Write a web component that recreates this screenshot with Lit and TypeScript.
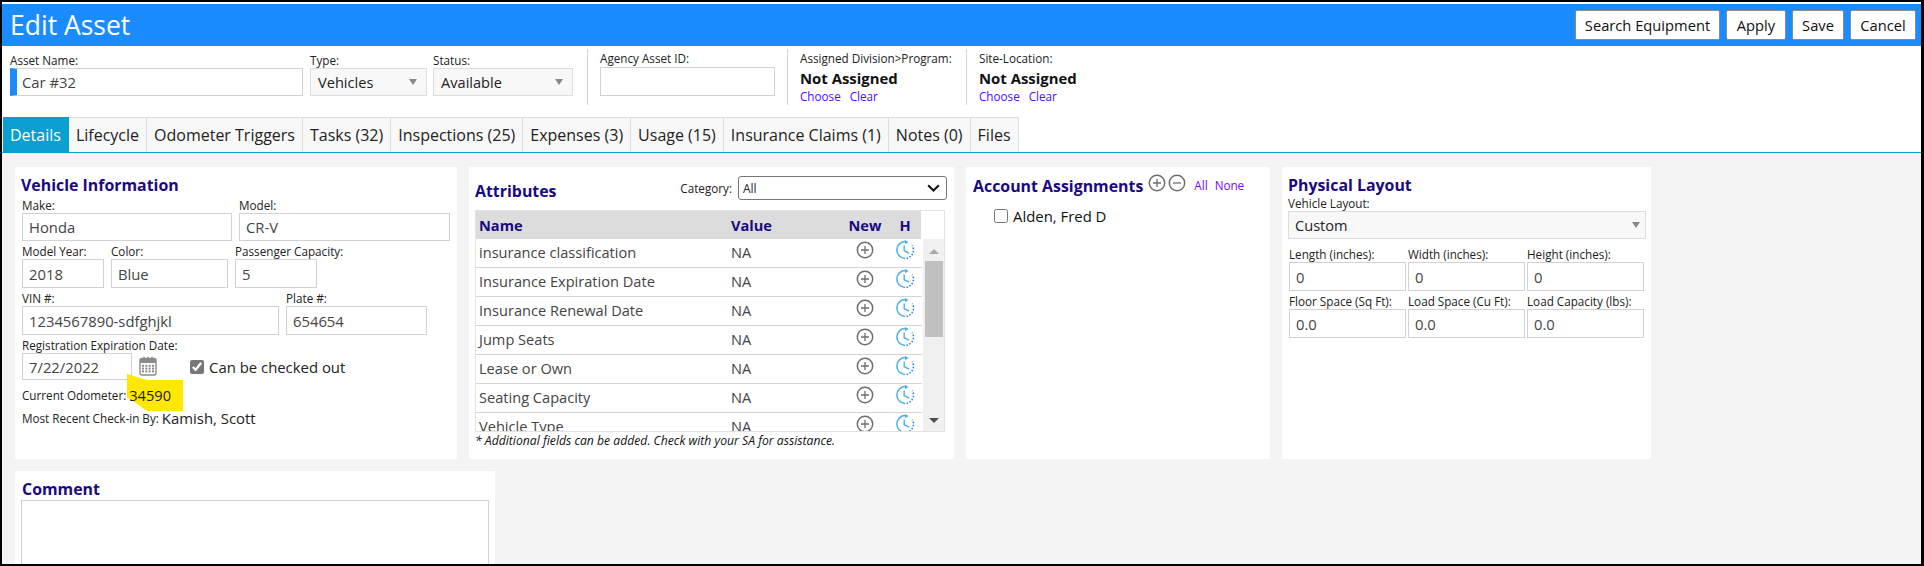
import { LitElement, html, css, svg } from "lit";
import { customElement } from "lit/decorators.js";

const plus = () => html`<svg class="ic" width="18" height="18" viewBox="0 0 18 18"><circle cx="9" cy="9" r="7.7" fill="none" stroke="#6e6e6e" stroke-width="1.5"/><path d="M9 5v8M5 9h8" stroke="#6e6e6e" stroke-width="1.3"/></svg>`;
const minus = () => html`<svg class="ic" width="18" height="18" viewBox="0 0 18 18"><circle cx="9" cy="9" r="7.7" fill="none" stroke="#6e6e6e" stroke-width="1.5"/><path d="M5 9h8" stroke="#6e6e6e" stroke-width="1.3"/></svg>`;
const clock = () => html`<svg class="ic" width="20" height="20" viewBox="0 0 20 20">
  <path d="M10.5 1.6A8.4 8.4 0 1 0 10 18.4" fill="none" stroke="#4db0ec" stroke-width="1.5"/>
  <path d="M11.5 18.3A8.4 8.4 0 0 0 17.2 5.6" fill="none" stroke="#2f86e8" stroke-width="1.6" stroke-dasharray="1.6 1.5"/>
  <path d="M10 0l3.6 2-3.6 2.2z" fill="#4db0ec"/>
  <path d="M9.2 5.5v5.2l5 2.4" fill="none" stroke="#4db0ec" stroke-width="1.4"/></svg>`;
const calendar = () => html`<svg width="18" height="20" viewBox="0 0 18 20">
  <rect x="1" y="2.5" width="16" height="16.5" rx="2" fill="#fff" stroke="#8a8a8a" stroke-width="1.4"/>
  <path d="M1 7V4.5a2 2 0 0 1 2-2h12a2 2 0 0 1 2 2V7z" fill="#8a8a8a"/>
  <path d="M5 .8v3M13 .8v3M9 .8v3" stroke="#8a8a8a" stroke-width="1.4"/>
  ${[8.8, 11.6, 14.4].map((y) => [4, 7.3, 10.6, 14].map((x) => svg`<rect x="${x - 1}" y="${y}" width="2" height="2" fill="#8a8a8a"/>`))}
</svg>`;
const chevron = () => html`<svg width="13" height="8" viewBox="0 0 13 8"><path d="M1.2 1.2l5.3 5.3 5.3-5.3" fill="none" stroke="#111" stroke-width="2"/></svg>`;

const tabs = ["Details", "Lifecycle", "Odometer Triggers", "Tasks (32)", "Inspections (25)", "Expenses (3)", "Usage (15)", "Insurance Claims (1)", "Notes (0)", "Files"];
const attrs = ["insurance classification", "Insurance Expiration Date", "Insurance Renewal Date", "Jump Seats", "Lease or Own", "Seating Capacity", "Vehicle Type"];

@customElement("app-root")
export class AppRoot extends LitElement {
  static styles = css`
    :host { display: block; width: 1924px; height: 566px; overflow: hidden; background: #000; font-family: "Open Sans", "Noto Sans", sans-serif; font-size: 11.7px; color: #222; }
    * { box-sizing: border-box; }
    .frame { margin: 2px 3px 2px 2px; height: 562px; background: #f4f4f4; overflow: hidden; }
    .top-strip { height: 2px; background: #fff; }
    .head { height: 42px; background: #1a8cff; display: flex; align-items: center; justify-content: space-between; padding: 0 5px 0 8px; }
    .head h1 { margin: 0; font-size: 26.5px; font-weight: 400; color: #fff; line-height: 42px; }
    .btns { display: flex; gap: 6px; }
    .btn { height: 30px; display: flex; align-items: center; justify-content: center; background: #fff; border: 1px solid #8a8a8a; border-radius: 2px; font-size: 14.7px; color: #111; }
    .b1 { width: 145px; } .b2 { width: 60px; } .b3 { width: 52px; } .b4 { width: 66px; }

    .bar { height: 71px; background: #fff; display: flex; padding-left: 8px; }
    .lbl { height: 14px; line-height: 13px; font-size: 11.7px; white-space: nowrap; color: #222; }
    .f { display: flex; flex-direction: column; }
    .bar .main { display: flex; gap: 6px; padding-top: 8px; }
    input.i { display: block; border: 1px solid #d2d2d2; background: #fff; padding: 0 6px; margin: 0; font: inherit; font-size: 14.8px; color: #444; outline: none; height: 29px; width: 100%; border-radius: 0; }
    input.i.name { width: 293px; border-left: 7px solid #1a8cff; height: 28px; padding-left: 5px; margin-right: 1px; }
    .sel { height: 28px; display: flex; align-items: center; justify-content: space-between; background: #f8f8f8; border: 1px solid #ddd; font-size: 14.6px; color: #222; padding: 0 9px 0 7px; }
    .tri { width: 0; height: 0; border-left: 4.5px solid transparent; border-right: 4.5px solid transparent; border-top: 6px solid #888; }
    .type { width: 117px; } .status { width: 140px; }
    .sec { margin: 3px 0 12px 14px; border-left: 1px solid #d4d4d4; padding: 3px 0 0 12px; }
    .agency { width: 188px; margin-left: 14px; flex: none; }
    .agency input.i { width: 175px; height: 29px; margin-top: 1px; }
    .assign { width: 179px; margin-left: 12px; flex: none; }
    .site { margin-left: 0; }
    .na { font-size: 14.9px; font-weight: 700; color: #111; line-height: 20px; margin-top: 2px; white-space: nowrap; }
    .links { display: flex; gap: 9px; font-size: 11.7px; line-height: 16px; color: #4a0dff; margin-top: 0; }

    .tabs { height: 36px; background: #fff; border-bottom: 1px solid #0a9fd1; display: flex; padding-left: 1px; }
    .tab { height: 35px; padding: 0 7px; display: flex; align-items: center; background: #f8f8f8; border: 1px solid #ddd; border-left: 0; border-bottom: 0; font-size: 16px; color: #222; white-space: nowrap; }
    .tab.on { background: #0a9fd1; color: #fff; border-color: #0a9fd1; }

    .panels { display: flex; padding: 14px 0 0 13px; gap: 12px; height: 306px; }
    .panels2 { padding: 0 0 0 13px; height: 120px; margin-top: 12px; }
    .p { background: #fff; height: 292px; padding: 6px 7px; flex: none; }
    .p1 { width: 442px; } .p2 { width: 485px; } .p3 { width: 304px; } .p4 { width: 369px; padding-left: 6px; padding-right: 5px; }
    h2 { margin: 0; font-size: 15.9px; font-weight: 700; color: #1a0a80; line-height: 24px; white-space: nowrap; }
    .row { display: flex; gap: 7px; margin-top: 4px; }
    .p1 h2 { margin-left: -1px; margin-bottom: 2px; }
    .p1 .row:first-of-type { margin-top: 0; }
    .w210 { width: 210px; } .w211 { width: 211px; } .w82 { width: 82px; } .w117 { width: 117px; } .w257 { width: 257px; } .w141 { width: 141px; } .w110 { width: 110px; }
    input.i.h28 { height: 28px; } input.i.h27 { height: 27px; }
    .datewrap { gap: 0; align-items: flex-start; }
    .cal { margin: 3px 0 0 7px; width: 18px; }
    .chk { display: flex; align-items: center; gap: 5px; font-size: 14.9px; color: #222; white-space: nowrap; }
    .chk input { width: 14px; height: 14px; margin: 0; accent-color: #777; flex: none; }
    .dchk { margin: 4px 0 0 33px; }
    .odo { display: flex; align-items: center; margin-top: 7px; height: 16px; position: relative; }
    .mark { position: absolute; left: 105px; top: -13px; width: 56px; height: 37px; background: #ffe800; clip-path: polygon(0 0, 36% 16%, 100% 16%, 100% 100%, 36% 100%, 0 62%); }
    .odoval { position: relative; margin-left: 3px; font-size: 14.6px; color: #222; }
    .recent { display: flex; align-items: center; margin-top: 5px; height: 20px; }
    .recent b { font-weight: 400; font-size: 14.9px; color: #222; margin-left: 3px; }

    .attr-head { display: flex; align-items: center; justify-content: space-between; height: 30px; margin-bottom: 7px; }
    .attr-head h2 { position: relative; top: 3px; margin-left: -1px; }
    .cat { display: flex; align-items: center; gap: 6px; }
    .catsel { width: 209px; height: 24px; border: 1px solid #767676; border-radius: 3px; display: flex; align-items: center; justify-content: space-between; padding: 0 6px 0 4px; font-size: 12px; color: #222; background: #fff; }
    .tbl { width: 470px; height: 222px; border: 1px solid #e2e2e2; display: flex; flex-direction: column; overflow: hidden; margin-left: -1px; }
    .thead { display: flex; height: 28px; flex: none; }
    .thead .cells { width: 445px; background: #dcdcdc; padding-bottom: 1px; }
    .cells { display: grid; grid-template-columns: 255px 110px 48px 32px; align-items: center; font-size: 14.6px; color: #444; }
    .thead .cells { font-weight: 700; color: #1a0a80; }
    .cells > :nth-child(1) { padding-left: 3px; }
    .cells > :nth-child(3), .cells > :nth-child(4) { display: flex; justify-content: center; }
    .tbody { display: flex; flex: 1; min-height: 0; }
    .rows { width: 446px; overflow: hidden; }
    .rows .cells { height: 29px; border-bottom: 1px solid #d4d4d4; padding-bottom: 2px; }
    .rows .ic { position: relative; top: -2px; }
    .sb { flex: 1; background: #f0f0f0; display: flex; flex-direction: column; align-items: center; padding-top: 10px; margin-left: 1px; }
    .up { width: 0; height: 0; border-left: 5px solid transparent; border-right: 5px solid transparent; border-bottom: 5px solid #a8a8a8; }
    .dn { width: 0; height: 0; border-left: 5px solid transparent; border-right: 5px solid transparent; border-top: 5px solid #505050; margin-top: 81px; }
    .thumb { width: 18px; height: 76px; background: #c0c0c0; margin-top: 7px; }
    .note { font-style: italic; font-size: 12.2px; color: #111; line-height: 16px; margin: 1px 0 0 -1px; white-space: nowrap; }

    .acct-head { display: flex; align-items: flex-start; }
    .acct-head h2 { margin-right: 5px; position: relative; top: 1px; }
    .acct-head .ics { display: flex; gap: 2px; margin-top: 1px; }
    .acct-head .links { gap: 7px; margin: 4px 0 0 8px; color: #6a0dff; }
    .p3 .chk { margin: 9px 0 0 21px; color: #111; }

    .wide { height: 28px; padding-left: 6px; padding-right: 5px; }
    .three { display: grid; grid-template-columns: 117px 117px 117px; column-gap: 2px; margin: 9px 0 0 1px; }
    .three.second { margin-top: 4px; }

    .p5 { width: 480px; height: 110px; }
    .p5 h2 { margin-bottom: -1px; }
    textarea { display: block; width: 468px; height: 120px; margin: 0 0 0 -1px; border: 1px solid #d2d2d2; resize: none; outline: none; }
  `;

  field(label: string, value: string, cls: string, icls = "") {
    return html`<div class="f ${cls}"><div class="lbl">${label}</div><input class="i ${icls}" .value=${value} /></div>`;
  }

  render() {
    return html`<div class="frame">
      <div class="top-strip"></div>
      <header class="head"><h1>Edit Asset</h1>
        <div class="btns"><div class="btn b1">Search Equipment</div><div class="btn b2">Apply</div><div class="btn b3">Save</div><div class="btn b4">Cancel</div></div>
      </header>
      <section class="bar">
        <div class="main">
          <div class="f"><div class="lbl">Asset Name:</div><input class="i name" .value=${"Car #32"} /></div>
          <div class="f type"><div class="lbl">Type:</div><div class="sel">Vehicles<span class="tri"></span></div></div>
          <div class="f status"><div class="lbl">Status:</div><div class="sel">Available<span class="tri"></span></div></div>
        </div>
        <div class="sec agency"><div class="lbl">Agency Asset ID:</div><input class="i" /></div>
        <div class="sec assign"><div class="lbl">Assigned Division&gt;Program:</div><div class="na">Not Assigned</div><div class="links"><span>Choose</span><span>Clear</span></div></div>
        <div class="sec site"><div class="lbl">Site-Location:</div><div class="na">Not Assigned</div><div class="links"><span>Choose</span><span>Clear</span></div></div>
      </section>
      <nav class="tabs">${tabs.map((t, i) => html`<div class="tab ${i === 0 ? "on" : ""}">${t}</div>`)}</nav>
      <div class="panels">
        <section class="p p1">
          <h2>Vehicle Information</h2>
          <div class="row">${this.field("Make:", "Honda", "w210", "h28")}${this.field("Model:", "CR-V", "w211", "h28")}</div>
          <div class="row">${this.field("Model Year:", "2018", "w82")}${this.field("Color:", "Blue", "w117")}${this.field("Passenger Capacity:", "5", "w82")}</div>
          <div class="row">${this.field("VIN #:", "1234567890-sdfghjkl", "w257")}${this.field("Plate #:", "654654", "w141")}</div>
          <div class="row datewrap">
            ${this.field("Registration Expiration Date:", "7/22/2022", "w110", "h27")}
            <div class="f"><div class="lbl"></div><div class="cal">${calendar()}</div></div>
            <div class="f"><div class="lbl"></div><label class="chk dchk"><input type="checkbox" checked />Can be checked out</label></div>
          </div>
          <div class="odo"><span class="mark"></span>Current Odometer:<span class="odoval">34590</span></div>
          <div class="recent">Most Recent Check-in By:<b>Kamish, Scott</b></div>
        </section>
        <section class="p p2">
          <div class="attr-head"><h2>Attributes</h2><div class="cat"><span>Category:</span><div class="catsel">All ${chevron()}</div></div></div>
          <div class="tbl">
            <div class="thead"><div class="cells"><span>Name</span><span>Value</span><span>New</span><span>H</span></div></div>
            <div class="tbody">
              <div class="rows">${attrs.map((a) => html`<div class="cells"><span>${a}</span><span>NA</span><span>${plus()}</span><span>${clock()}</span></div>`)}</div>
              <div class="sb"><span class="up"></span><span class="thumb"></span><span class="dn"></span></div>
            </div>
          </div>
          <div class="note">* Additional fields can be added. Check with your SA for assistance.</div>
        </section>
        <section class="p p3">
          <div class="acct-head"><h2>Account Assignments</h2><span class="ics">${plus()}${minus()}</span><div class="links"><span>All</span><span>None</span></div></div>
          <label class="chk"><input type="checkbox" />Alden, Fred D</label>
        </section>
        <section class="p p4">
          <h2>Physical Layout</h2>
          <div class="lbl">Vehicle Layout:</div>
          <div class="sel wide">Custom<span class="tri"></span></div>
          <div class="three">${this.field("Length (inches):", "0", "")}${this.field("Width (inches):", "0", "")}${this.field("Height (inches):", "0", "")}</div>
          <div class="three second">${this.field("Floor Space (Sq Ft):", "0.0", "")}${this.field("Load Space (Cu Ft):", "0.0", "")}${this.field("Load Capacity (lbs):", "0.0", "")}</div>
        </section>
      </div>
      <div class="panels panels2"><section class="p p5"><h2>Comment</h2><textarea></textarea></section></div>
    </div>`;
  }
}
